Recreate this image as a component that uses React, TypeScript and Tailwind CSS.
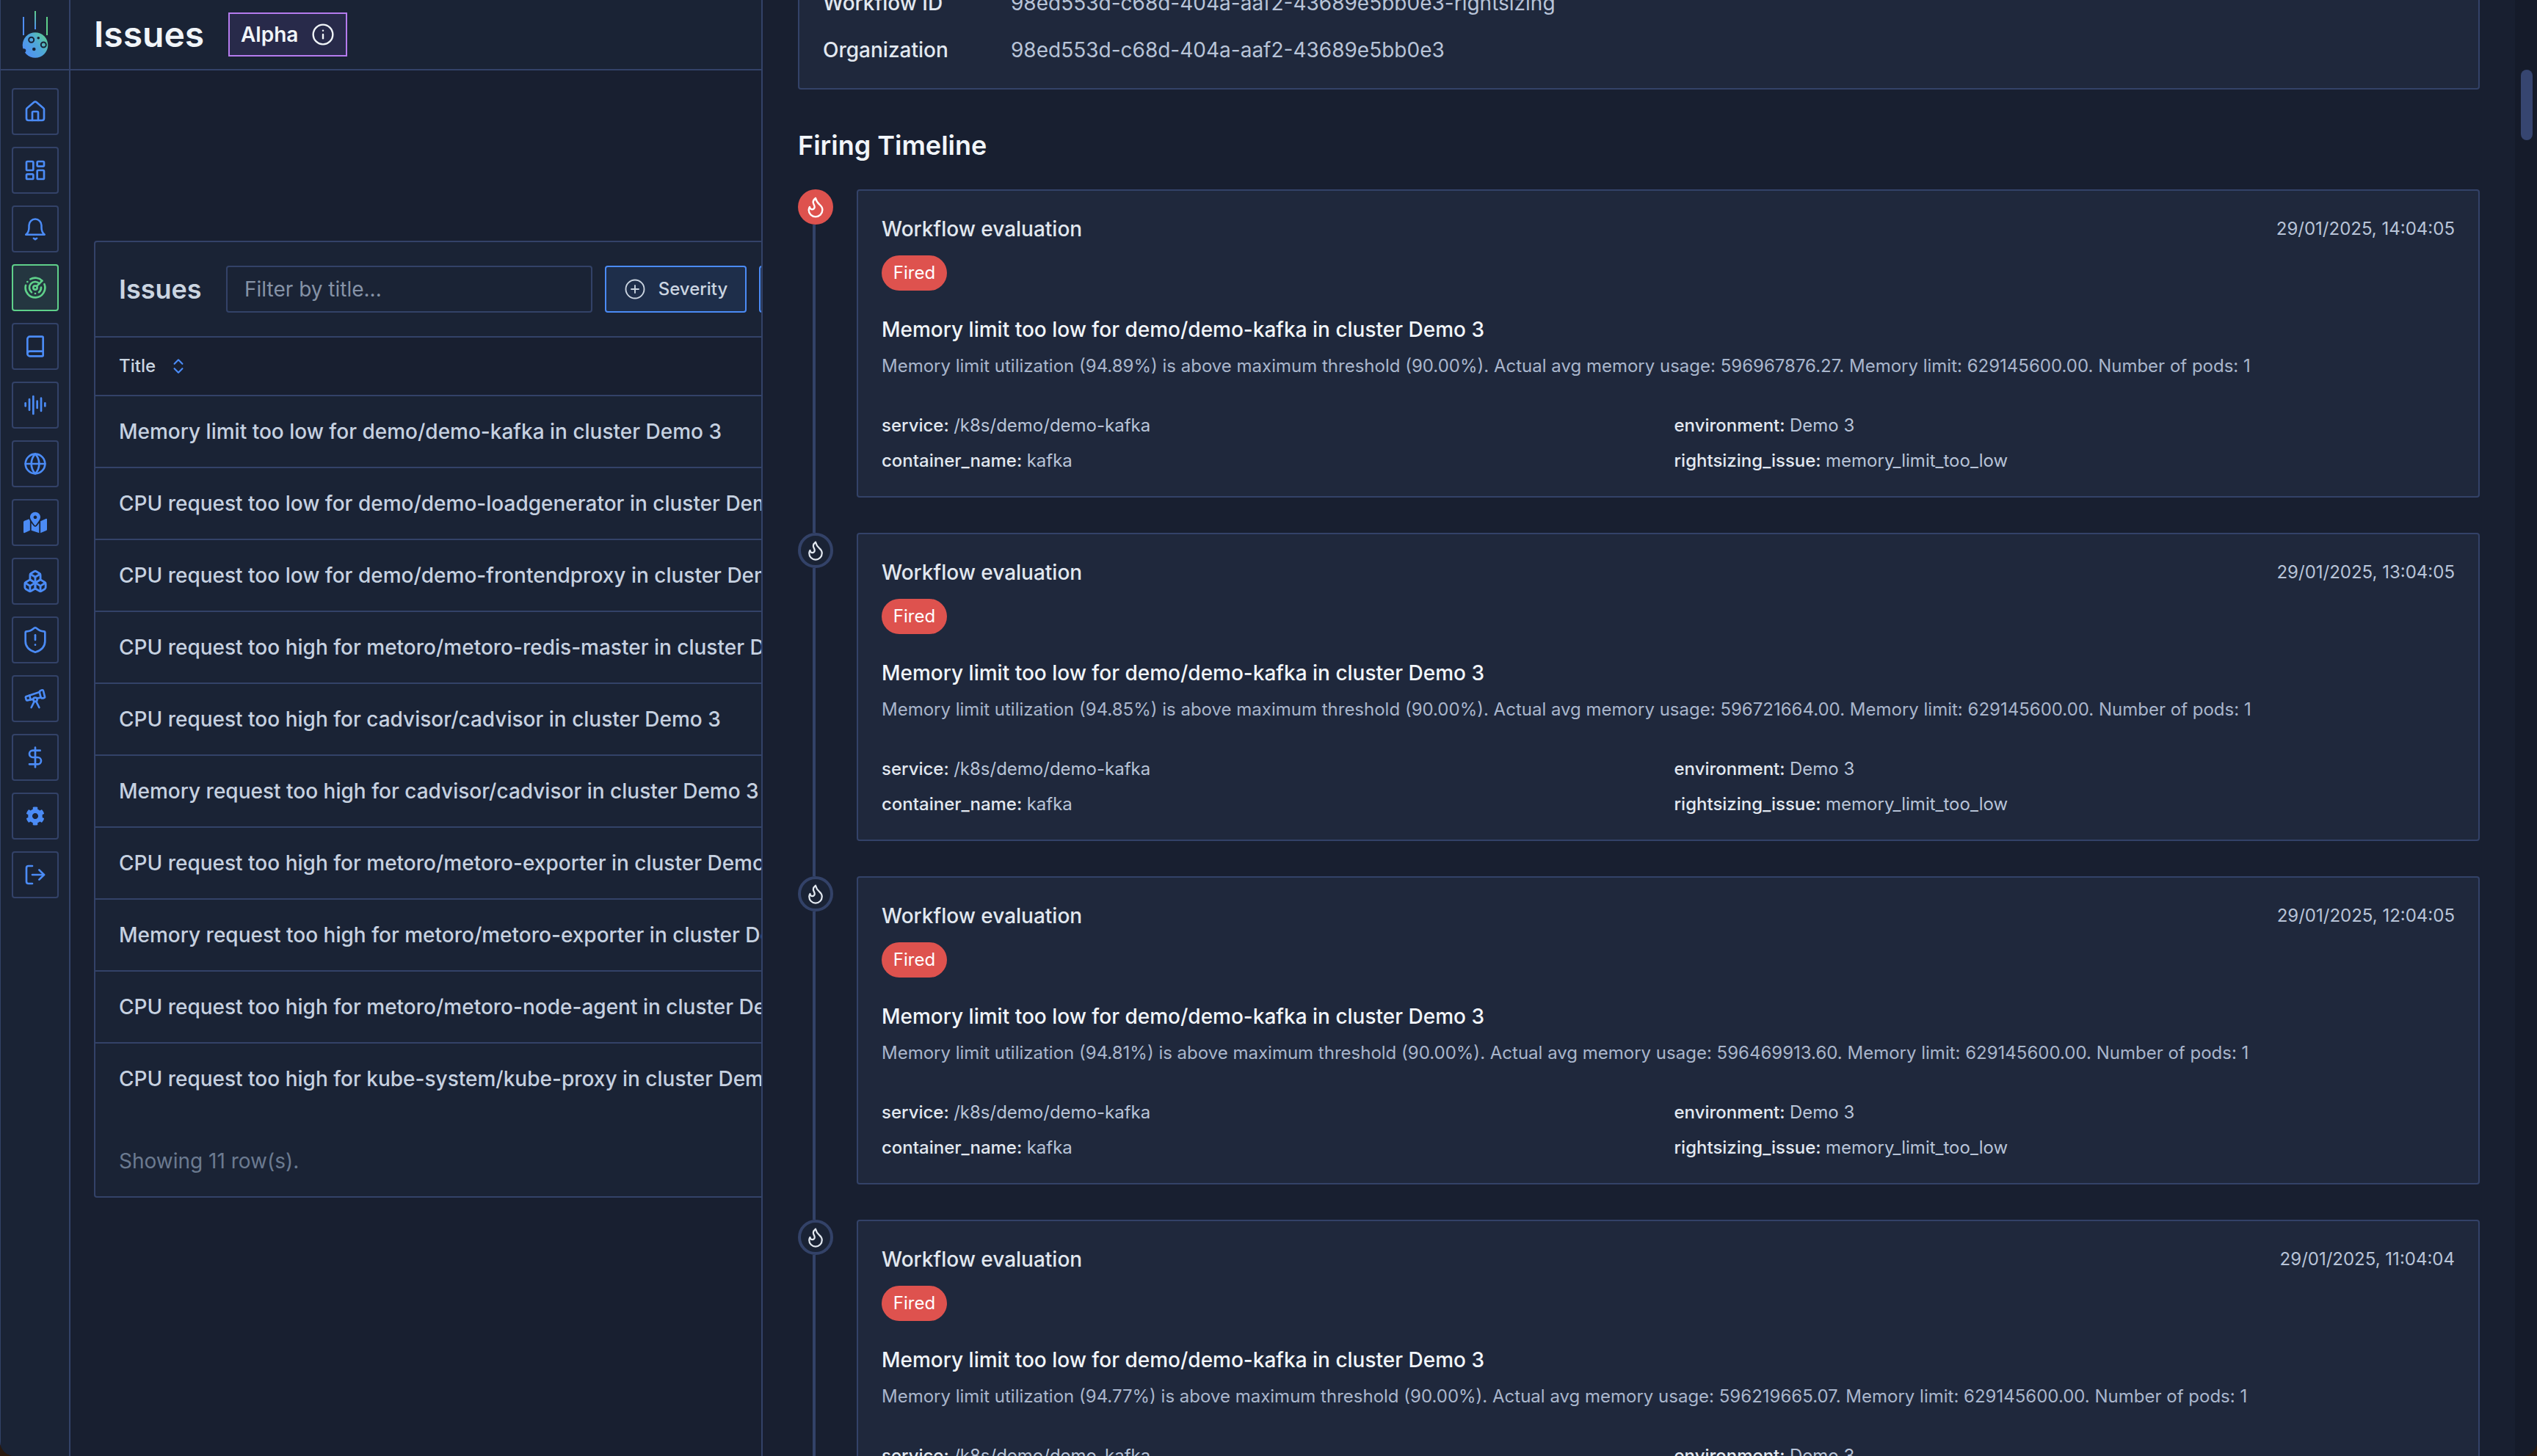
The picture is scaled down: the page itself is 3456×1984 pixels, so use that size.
import React from "react";
import {
  AudioLines,
  Book,
  Boxes,
  ChevronsUpDown,
  CirclePlus,
  DollarSign,
  Flame,
  Globe,
  House,
  Info,
  LayoutDashboard,
  LogOut,
  Radar,
  ShieldAlert,
  Telescope,
} from "lucide-react";
import { FaCog, FaMapMarkedAlt } from "react-icons/fa";

const Logo = () => (
  <svg width="40" height="70" viewBox="28 12 40 70" fill="none">
    <defs>
      <linearGradient id="planet" x1="0" y1="0.8" x2="1" y2="0.1">
        <stop offset="0" stopColor="#4f8df7" />
        <stop offset="0.55" stopColor="#4fa8d8" />
        <stop offset="1" stopColor="#5fd08a" />
      </linearGradient>
      <linearGradient id="trail" x1="0" y1="1" x2="0" y2="0">
        <stop offset="0" stopColor="#4f8df7" />
        <stop offset="1" stopColor="#5fd08a" />
      </linearGradient>
    </defs>
    <rect x="31" y="23" width="2" height="25" fill="#4f8df7" />
    <rect x="47" y="15" width="2" height="25" fill="url(#trail)" />
    <rect x="63" y="23" width="2" height="25" fill="#5fd08a" />
    <circle cx="48" cy="61.500" r="17.300" fill="url(#planet)" />
    <circle cx="32.500" cy="69" r="2.800" fill="#1a2335" />
    <circle cx="42.700" cy="54.300" r="3.500" stroke="#1a2335" strokeWidth="2" />
    <circle cx="59.300" cy="61" r="3.500" stroke="#1a2335" strokeWidth="2" />
    <circle cx="52.300" cy="51.700" r="1.800" fill="#1a2335" />
    <circle cx="46.300" cy="67" r="2.300" fill="#1a2335" />
  </svg>
);

const BellIcon = ({ size = 32 }: { size?: number }) => (
  <svg
    width={size}
    height={size}
    viewBox="0 1 24 24"
    fill="none"
    stroke="currentColor"
    strokeWidth="1.800"
    strokeLinecap="round"
    strokeLinejoin="round"
  >
    <path d="M3 18.500c1.800-1.500 3-3.500 3-7V9.500a6 6 0 0 1 12 0v2c0 3.500 1.200 5.500 3 7z" />
    <path d="M10.500 22l1.500 1 1.500-1" />
  </svg>
);

const navItems = [
  <House size={32} />,
  <LayoutDashboard size={32} />,
  <BellIcon size={34} />,
  <Radar size={32} />,
  <Book size={32} />,
  <AudioLines size={32} />,
  <Globe size={32} />,
  <FaMapMarkedAlt size={32} />,
  <Boxes size={34} />,
  <ShieldAlert size={40} strokeWidth={1.600} />,
  <Telescope size={32} />,
  <DollarSign size={32} />,
  <FaCog size={26} />,
  <LogOut size={32} />,
];

const issues = [
  "Memory limit too low for demo/demo-kafka in cluster Demo 3",
  "CPU request too low for demo/demo-loadgenerator in cluster Demo 3",
  "CPU request too low for demo/demo-frontendproxy in cluster Demo 3",
  "CPU request too high for metoro/metoro-redis-master in cluster Demo 3",
  "CPU request too high for cadvisor/cadvisor in cluster Demo 3",
  "Memory request too high for cadvisor/cadvisor in cluster Demo 3",
  "CPU request too high for metoro/metoro-exporter in cluster Demo 3",
  "Memory request too high for metoro/metoro-exporter in cluster Demo 3",
  "CPU request too high for metoro/metoro-node-agent in cluster Demo 3",
  "CPU request too high for kube-system/kube-proxy in cluster Demo 3",
];

const events = [
  { time: "29/01/2025, 14:04:05", pct: "94.89", usage: "596967876.27" },
  { time: "29/01/2025, 13:04:05", pct: "94.85", usage: "596721664.00" },
  { time: "29/01/2025, 12:04:05", pct: "94.81", usage: "596469913.60" },
  { time: "29/01/2025, 11:04:04", pct: "94.77", usage: "596219665.07" },
];

const Sidebar = () => (
  <aside className="w-[96px] shrink-0 h-full flex flex-col bg-[#1a2335] border-l border-r-2 border-[#334268]">
    <div className="h-[96px] shrink-0 border-b-2 border-[#334268] flex items-start pl-[27px] pt-[12px]">
      <Logo />
    </div>
    <nav className="flex flex-col gap-[16px] pt-[24px] pl-[15px]">
      {navItems.map((icon, i) => (
        <div
          key={i}
          className={
            i === 3
              ? "w-[64px] h-[64px] rounded-[4px] border-2 border-[#5fd08a] bg-[#243640] text-[#5fd08a] flex items-center justify-center"
              : "w-[64px] h-[64px] rounded-[4px] border-2 border-[#334268] text-[#4b8bf5] flex items-center justify-center"
          }
        >
          {icon}
        </div>
      ))}
    </nav>
  </aside>
);

const IssuesTable = () => (
  <div className="ml-[32px] mt-[232px] w-[1400px] h-[1304px] rounded-[4px] border-2 border-[#334268] bg-[#1a2335]">
    <div className="h-[130px] flex items-center pl-[32px] gap-[17px] border-b-2 border-[#334268]">
      <h2 className="text-[36px] font-semibold text-[#cbd5e1] w-[129px] shrink-0">Issues</h2>
      <div className="w-[499px] h-[64px] shrink-0 rounded-[4px] border-2 border-[#334268] flex items-center pl-[23px] text-[28px] text-[#8592a6]">
        Filter by title...
      </div>
      <button className="w-[193px] h-[64px] shrink-0 rounded-[4px] border-2 border-[#4b8bf5] bg-[#1e2e4a] flex items-center justify-center gap-[17px] text-[24px] font-medium text-[#cbd5e1]">
        <CirclePlus size={30} strokeWidth={1.500} />
        Severity
      </button>
      <button className="w-[193px] h-[64px] shrink-0 rounded-[4px] border-2 border-[#4b8bf5] bg-[#1e2e4a]" />
    </div>
    <div className="h-[80px] flex items-center gap-[18px] pl-[32px] bg-[#181f30] border-b-2 border-[#334268] text-[24px] font-medium text-[#cbd5e1]">
      Title
      <ChevronsUpDown size={26} className="text-[#4b8bf5]" />
    </div>
    {issues.map((title, i) => (
      <div
        key={title}
        className={
          i === issues.length - 1
            ? "h-[96px] flex items-center pl-[32px] text-[28px] font-medium text-[#c6d1e0] whitespace-nowrap"
            : "h-[98px] flex items-center pl-[32px] text-[28px] font-medium text-[#c6d1e0] whitespace-nowrap border-b-2 border-[#334268]"
        }
      >
        {title}
      </div>
    ))}
    <div className="h-[112px] pt-[16px] pl-[32px] flex items-center text-[28px] text-[#6b7a90]">
      Showing 11 row(s).
    </div>
  </div>
);

const Label = ({ k, v }: { k: string; v: string }) => (
  <div className="h-[48px] flex items-center whitespace-pre text-[24px] text-[#b8c4d8]">
    <span className="font-medium text-[#e2e8f0]">{k}: </span>
    {v}
  </div>
);

const TimelineEntry = ({
  first,
  time,
  pct,
  usage,
}: {
  first: boolean;
  time: string;
  pct: string;
  usage: string;
}) => (
  <div className="flex gap-[32px]">
    <div className="w-[48px] shrink-0 flex flex-col items-center">
      <div
        className={
          first
            ? "w-[48px] h-[48px] shrink-0 rounded-full bg-[#de524e] text-white flex items-center justify-center"
            : "w-[48px] h-[48px] shrink-0 rounded-full border-4 border-[#334268] bg-[#1a2335] text-[#e2e8f0] flex items-center justify-center"
        }
      >
        <Flame size={first ? 32 : 30} strokeWidth={1.800} />
      </div>
      <div className="w-[4px] flex-1 mr-[4px] bg-[#334268]" />
    </div>
    <div className="flex-1 pb-[48px]">
      <div className="h-[420px] rounded-[4px] border-2 border-[#334268] bg-[#1f283c] px-[32px] pt-[32px]">
        <div className="flex justify-between items-center h-[40px]">
          <span className="text-[28px] font-medium text-[#e2e8f0]">Workflow evaluation</span>
          <span className="text-[24px] text-[#b8c4d8]">{time}</span>
        </div>
        <div className="mt-[16px] w-[89px] h-[48px] rounded-full bg-[#de524e] flex items-center justify-center text-[24px] text-white">
          Fired
        </div>
        <div className="mt-[33px] h-[40px] flex items-center text-[28px] font-medium text-[#f1f5f9]">
          Memory limit too low for demo/demo-kafka in cluster Demo 3
        </div>
        <div className="mt-[14px] h-[32px] flex items-center text-[24px] text-[#a9b6cc] whitespace-nowrap">
          Memory limit utilization ({pct}%) is above maximum threshold (90.00%). Actual avg memory usage: {usage}. Memory limit: 629145600.00. Number of pods: 1
        </div>
        <div className="mt-[41px] grid grid-cols-2 gap-x-[16px]">
          <Label k="service" v="/k8s/demo/demo-kafka" />
          <Label k="environment" v="Demo 3" />
          <Label k="container_name" v="kafka" />
          <Label k="rightsizing_issue" v="memory_limit_too_low" />
        </div>
      </div>
    </div>
  </div>
);

const Drawer = () => (
  <div className="absolute top-0 bottom-0 left-[1037px] right-0 flex bg-[#181f30] border-l-2 border-[#334268] overflow-hidden">
    <div className="flex-1 min-w-0 pl-[48px] pr-[48px]">
      <div className="-mt-[50px] rounded-[4px] border-2 border-[#334268] bg-[#1f283c] pl-[32px] pr-[32px] pt-[32px] pb-[32px] flex flex-col gap-[24px] text-[28px]">
        <div className="flex h-[40px] items-center">
          <span className="w-[256px] font-medium text-[#e2e8f0]">Workflow ID</span>
          <span className="text-[#b8c4d8]">98ed553d-c68d-404a-aaf2-43689e5bb0e3-rightsizing</span>
        </div>
        <div className="flex h-[40px] items-center">
          <span className="w-[256px] font-medium text-[#e2e8f0]">Organization</span>
          <span className="text-[#b8c4d8]">98ed553d-c68d-404a-aaf2-43689e5bb0e3</span>
        </div>
      </div>
      <h2 className="mt-[48px] mb-[32px] h-[56px] flex items-center text-[36px] font-semibold text-[#f1f5f9]">
        Firing Timeline
      </h2>
      {events.map((e, i) => (
        <TimelineEntry key={e.time} first={i === 0} {...e} />
      ))}
    </div>
    <div className="relative w-[30px] shrink-0 bg-[#151b2a]">
      <div className="absolute top-[95px] left-[8px] w-[16px] h-[96px] rounded-full bg-[#364570]" />
    </div>
  </div>
);

export default function App() {
  return (
    <div className="w-[3456px] h-[1984px] bg-[#2a1a10] font-['Inter',sans-serif]">
      <div className="relative w-full h-full flex rounded-b-[20px] overflow-hidden bg-[#181f30]">
        <Sidebar />
        <div className="flex-1 min-w-0 flex flex-col">
          <header className="h-[96px] shrink-0 flex items-center gap-[33px] pl-[32px] border-b-2 border-[#334268] bg-[#1a2335]">
            <h1 className="text-[48px] font-semibold text-[#f1f5f9]">Issues</h1>
            <div className="w-[162px] h-[60px] border-2 border-[#b57bee] bg-[#282a4a] flex items-center justify-center gap-[18px] text-[28px] font-semibold text-[#f1f5f9]">
              Alpha
              <Info size={32} strokeWidth={1.800} />
            </div>
          </header>
          <IssuesTable />
        </div>
        <Drawer />
      </div>
    </div>
  );
}
